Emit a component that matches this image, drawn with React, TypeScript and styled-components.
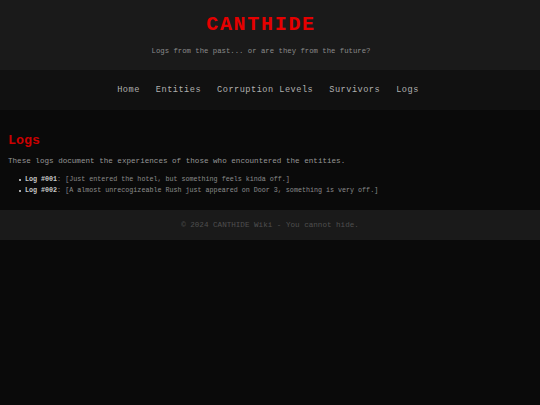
import React from "react";
import styled, { createGlobalStyle } from "styled-components";

const Global = createGlobalStyle`
  html, body { margin: 0; padding: 0; background: #0a0a0a; }
  body { font-family: "Liberation Mono", "Courier New", monospace; color: #999; }
`;

const Page = styled.div`
  min-height: 405px;
  background: #0a0a0a;
`;

const Header = styled.header`
  background: #1a1a1a;
  height: 70px;
  display: flex;
  flex-direction: column;
  align-items: center;
  box-sizing: border-box;
  padding: 14px 18px 0 0;
`;

const Title = styled.h1`
  margin: 0;
  font-size: 20px;
  line-height: 22px;
  font-weight: bold;
  letter-spacing: 1.7px;
  color: #e60000;
`;

const Subtitle = styled.p`
  margin: 10px 0 0;
  font-size: 7.3px;
  line-height: 10px;
  color: #8a8a8a;
`;

const Nav = styled.nav`
  background: #111;
  height: 40px;
  display: flex;
  justify-content: center;
  align-items: center;
  gap: 16px;
  box-sizing: border-box;
  padding-right: 4px;
`;

const NavLink = styled.a`
  font-size: 8.6px;
  letter-spacing: 0.5px;
  color: #b0b0b0;
  text-decoration: none;
`;

const Main = styled.main`
  padding: 22px 8px 14px;
`;

const Heading = styled.h2`
  margin: 0;
  font-size: 13.3px;
  line-height: 18px;
  font-weight: bold;
  color: #cc0000;
`;

const Intro = styled.p`
  margin: 5px 0 0;
  font-size: 7.6px;
  line-height: 12px;
  color: #969696;
`;

const List = styled.ul`
  margin: 7px 0 0;
  padding-left: 11px;
  list-style: none;
`;

const Item = styled.li`
  font-size: 6.7px;
  line-height: 11px;
  color: #8a8a8a;
  display: flex;
  align-items: center;
  &::before {
    content: "";
    width: 2px;
    height: 2px;
    background: #aaa;
    margin-right: 4px;
    flex: none;
  }
`;

const Strong = styled.strong`
  color: #c8c8c8;
`;

const Footer = styled.footer`
  background: #1a1a1a;
  height: 30px;
  display: flex;
  justify-content: center;
  align-items: center;
  font-size: 7.6px;
  color: #4f4f4f;
`;

export default function App() {
  return (
    <Page>
      <Global />
      <Header>
        <Title>CANTHIDE</Title>
        <Subtitle>Logs from the past... or are they from the future?</Subtitle>
      </Header>
      <Nav>
        <NavLink href="#">Home</NavLink>
        <NavLink href="#">Entities</NavLink>
        <NavLink href="#">Corruption Levels</NavLink>
        <NavLink href="#">Survivors</NavLink>
        <NavLink href="#">Logs</NavLink>
      </Nav>
      <Main>
        <Heading>Logs</Heading>
        <Intro>These logs document the experiences of those who encountered the entities.</Intro>
        <List>
          <Item>
            <Strong>Log #001</Strong>: [Just entered the hotel, but something feels kinda off.]
          </Item>
          <Item>
            <Strong>Log #002</Strong>: [A almost unrecogizeable Rush just appeared on Door 3, something is very off.]
          </Item>
        </List>
      </Main>
      <Footer>© 2024 CANTHIDE Wiki - You cannot hide.</Footer>
    </Page>
  );
}
